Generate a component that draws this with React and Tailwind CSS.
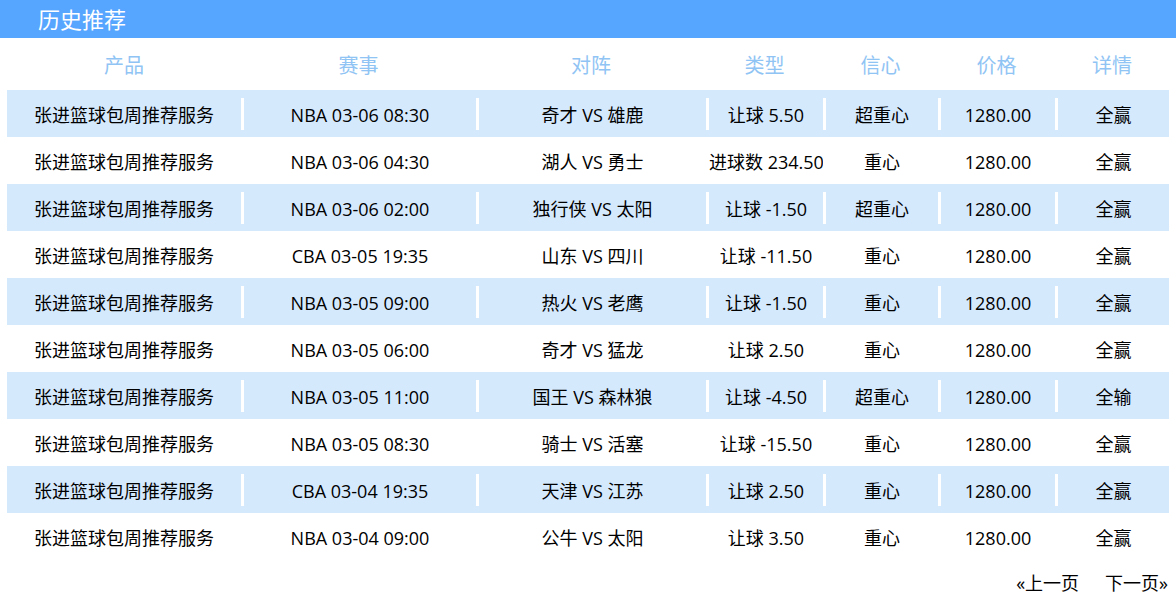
import React from 'react';

const rows = [
  ['NBA 03-06 08:30', '奇才 VS 雄鹿', '让球 5.50', '超重心', '全赢'],
  ['NBA 03-06 04:30', '湖人 VS 勇士', '进球数 234.50', '重心', '全赢'],
  ['NBA 03-06 02:00', '独行侠 VS 太阳', '让球 -1.50', '超重心', '全赢'],
  ['CBA 03-05 19:35', '山东 VS 四川', '让球 -11.50', '重心', '全赢'],
  ['NBA 03-05 09:00', '热火 VS 老鹰', '让球 -1.50', '重心', '全赢'],
  ['NBA 03-05 06:00', '奇才 VS 猛龙', '让球 2.50', '重心', '全赢'],
  ['NBA 03-05 11:00', '国王 VS 森林狼', '让球 -4.50', '超重心', '全输'],
  ['NBA 03-05 08:30', '骑士 VS 活塞', '让球 -15.50', '重心', '全赢'],
  ['CBA 03-04 19:35', '天津 VS 江苏', '让球 2.50', '重心', '全赢'],
  ['NBA 03-04 09:00', '公牛 VS 太阳', '让球 3.50', '重心', '全赢'],
];

const widths = ['w-[234px]', 'w-[235px]', 'w-[230px]', 'w-[117px]', 'w-[115px]', 'w-[117px]', 'w-[114px]'];
const heads = ['产品', '赛事', '对阵', '类型', '信心', '价格', '详情'];

// separators are a short white bar on the left of every cell but the first
const Cell = ({ i, children }) => (
  <div
    className={`${widths[i]} h-[32px] shrink-0 overflow-hidden whitespace-nowrap text-center leading-[35px] ${i > 0 ? 'border-l-[3px] border-white' : ''}`}
  >
    {children}
  </div>
);

export default function App() {
  return (
    <div className="w-[1176px] h-[610px] bg-white font-['Open_Sans','Noto_Sans_CJK_SC',sans-serif] text-black">
      <div className="h-[38px] bg-[#56a5ff] pl-[38px] flex items-center">
        <h1 className="text-[22px] text-white leading-none">历史推荐</h1>
      </div>

      <div className="mx-[7px]">
        <div className="flex h-[52px] items-center pt-[3px] text-[20px] text-[#90c4f4]">
          {heads.map((h, i) => (
            <div key={h} className={`${widths[i]} shrink-0 text-center`}>
              {h}
            </div>
          ))}
        </div>

        {rows.map((r, idx) => (
          <div
            key={idx}
            className={`flex h-[47px] items-center text-[18px] ${idx % 2 === 0 ? 'bg-[#d5e9fd]' : 'bg-white'}`}
          >
            <Cell i={0}>张进篮球包周推荐服务</Cell>
            <Cell i={1}>{r[0]}</Cell>
            <Cell i={2}>{r[1]}</Cell>
            <Cell i={3}>{r[2]}</Cell>
            <Cell i={4}>{r[3]}</Cell>
            <Cell i={5}>1280.00</Cell>
            <Cell i={6}>{r[4]}</Cell>
          </div>
        ))}
      </div>

      <div className="flex justify-end gap-[26px] pr-[8px] pt-[10px] text-[18px]">
        <span>«上一页</span>
        <span>下一页»</span>
      </div>
    </div>
  );
}
